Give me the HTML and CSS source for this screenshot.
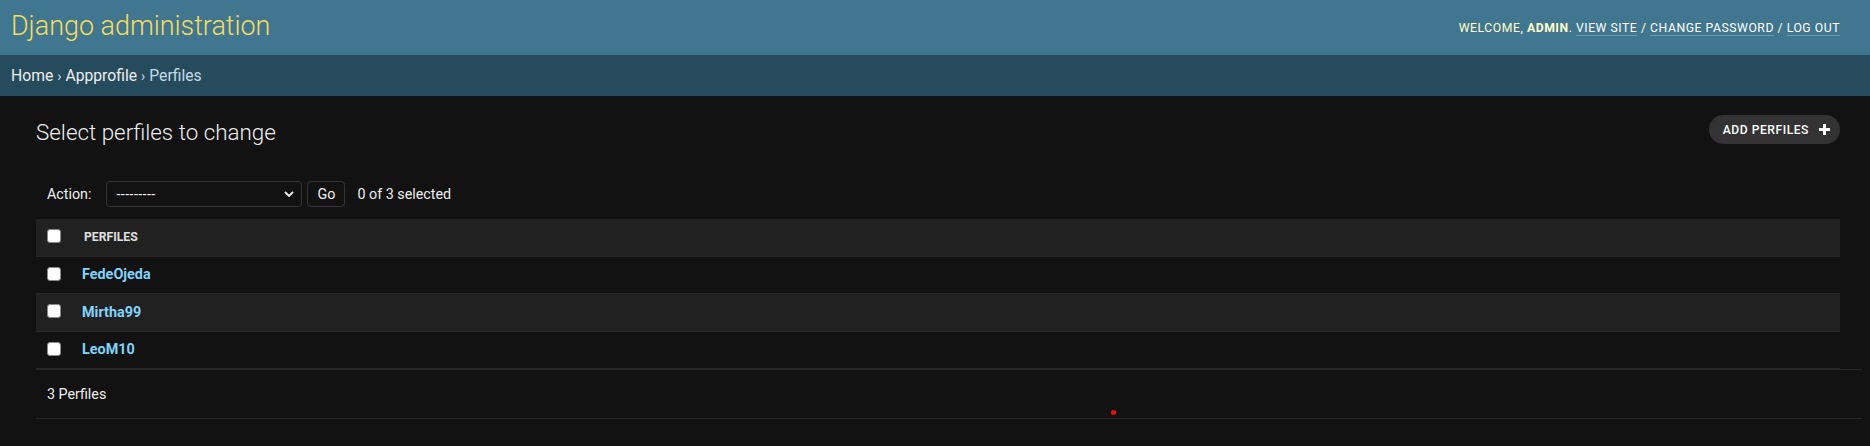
FILE: index.html
```html
<!DOCTYPE html>
<html lang="en">
<head>
<meta charset="utf-8">
<title>Select perfiles to change | Django site admin</title>
<link rel="stylesheet" href="styles.css">
</head>
<body>
<div class="header">
  <div class="branding">Django administration</div>
  <div class="user-tools">
    Welcome, <strong>admin</strong>.
    <a href="#">View site</a> /
    <a href="#">Change password</a> /
    <a href="#">Log out</a>
  </div>
</div>
<div class="breadcrumbs">
  <a href="#">Home</a><span class="sep">›</span><a href="#">Appprofile</a><span class="sep">›</span><span>Perfiles</span>
</div>
<div class="content">
  <div class="title-row">
    <h1>Select perfiles to change</h1>
    <a class="addlink" href="#">Add perfiles
      <svg class="plus" width="11" height="11" viewBox="0 0 11 11"><rect x="4" y="0" width="3" height="11" fill="#fff"/><rect x="0" y="4" width="11" height="3" fill="#fff"/></svg>
    </a>
  </div>
  <div class="actions">
    <span class="label">Action:</span>
    <div class="select"><span class="dashes">---------</span>
      <svg class="chev" width="10" height="6" viewBox="0 0 10 6"><path d="M1 1 L5 5 L9 1" fill="none" stroke="#eee" stroke-width="1.8"/></svg>
    </div>
    <button class="go" type="button">Go</button>
    <span class="counter">0 of 3 selected</span>
  </div>
  <div class="results">
    <table class="result-list">
      <thead>
        <tr><th class="cb-cell"><input type="checkbox" class="cb"></th><th class="col-name">Perfiles</th></tr>
      </thead>
      <tbody>
        <tr><td class="cb-cell"><input type="checkbox" class="cb"></td><th class="name"><a href="#">FedeOjeda</a></th></tr>
        <tr class="even"><td class="cb-cell"><input type="checkbox" class="cb"></td><th class="name"><a href="#">Mirtha99</a></th></tr>
        <tr><td class="cb-cell"><input type="checkbox" class="cb"></td><th class="name"><a href="#">LeoM10</a></th></tr>
      </tbody>
    </table>
  </div>
  <p class="paginator">3 Perfiles</p>
</div>
<div class="dot"></div>
</body>
</html>
```
FILE: styles.css
```css
* { box-sizing: border-box; }
html, body {
  margin: 0;
  padding: 0;
  background: #121212;
  color: #eeeeee;
  font-family: Roboto, "Liberation Sans", sans-serif;
  font-size: 14.3px;
}
body { min-height: 446px; position: relative; }
a { text-decoration: none; }

.header {
  height: 55px;
  background: #417690;
  display: flex;
  align-items: center;
  justify-content: space-between;
  padding: 0 30px 0 11px;
}
.branding {
  font-size: 26.9px;
  font-weight: 300;
  color: #f5dd5d;
  padding-bottom: 3px;
}
.user-tools {
  font-size: 12.2px;
  letter-spacing: 0.55px;
  text-transform: uppercase;
  color: #ffffcc;
}
.user-tools strong { font-weight: 700; }
.user-tools a {
  color: #ffffff;
  border-bottom: 1px solid rgba(255,255,255,0.25);
}

.breadcrumbs {
  height: 41px;
  background: #264b5d;
  display: flex;
  align-items: center;
  padding: 0 11px;
  font-size: 15.7px;
  color: #c4dce8;
}
.breadcrumbs a { color: #eeeeee; }
.breadcrumbs .sep { margin: 0 4px; font-size: 14px; }

.content {
  padding: 19px 8px 0 36px;
}
.title-row {
  display: flex;
  justify-content: space-between;
  align-items: flex-start;
  margin-right: 22px;
  height: 30px;
}
h1 {
  margin: 4px 0 0 0;
  font-size: 22.4px;
  font-weight: 300;
  color: #eeeeee;
}
.addlink {
  display: flex;
  align-items: center;
  height: 29px;
  padding: 0 10px 0 14px;
  background: #333333;
  border-radius: 15px;
  color: #ffffff;
  font-size: 12.1px;
  font-weight: 500;
  letter-spacing: 0.55px;
  text-transform: uppercase;
}
.addlink .plus { margin-left: 10px; }

.actions {
  margin-top: 24px;
  height: 50px;
  display: flex;
  align-items: center;
  padding: 0 11px;
}
.actions .label { margin-right: 15px; color: #eeeeee; }
.select {
  width: 196px;
  height: 26px;
  border: 1px solid #353535;
  border-radius: 4px;
  background: #121212;
  display: flex;
  align-items: center;
  justify-content: space-between;
  padding: 0 7px 0 9px;
  font-size: 14.3px;
}
.dashes { letter-spacing: 0.4px; }
.go {
  margin-left: 5px;
  width: 38px;
  height: 26px;
  border: 1px solid #353535;
  border-radius: 4px;
  background: #121212;
  color: #eeeeee;
  font-family: Roboto, "Liberation Sans", sans-serif;
  font-size: 14.3px;
  padding: 0;
}
.counter { margin-left: 12px; color: #eeeeee; }

.results { margin-right: 22px; }
.result-list {
  width: 100%;
  border-collapse: collapse;
}
.result-list thead th {
  height: 37px;
  background: #212121;
  border-bottom: 1px solid #272727;
  text-align: left;
  font-size: 12.2px;
  font-weight: 700;
  color: #e0e0e0;
  text-transform: uppercase;
  vertical-align: middle;
}
.result-list tbody tr { height: 37.5px; }
.result-list tbody td, .result-list tbody th {
  border-bottom: 1px solid #272727;
  vertical-align: middle;
  text-align: left;
}
.result-list tbody tr.even { background: #212121; }
.cb-cell {
  width: 46px;
  padding: 0 0 0 11px;
}
.col-name { padding-left: 2px; }
.name { padding: 0; font-size: 14.4px; font-weight: 700; }
.name a { color: #81d4fa; }

.cb {
  -webkit-appearance: none;
  appearance: none;
  display: block;
  margin: 0 0 2px 0;
  width: 14px;
  height: 14px;
  background: #ffffff;
  border: 1px solid #8a8a8a;
  border-radius: 3px;
}

.paginator {
  margin: 0;
  height: 50px;
  border-top: 1px solid #272727;
  border-bottom: 1px solid #272727;
  display: flex;
  align-items: center;
  padding-left: 11px;
  font-size: 14.3px;
  color: #eeeeee;
}

.dot {
  position: absolute;
  left: 1111px;
  top: 410px;
  width: 5px;
  height: 5px;
  border-radius: 50%;
  background: #ee1111;
}
```
